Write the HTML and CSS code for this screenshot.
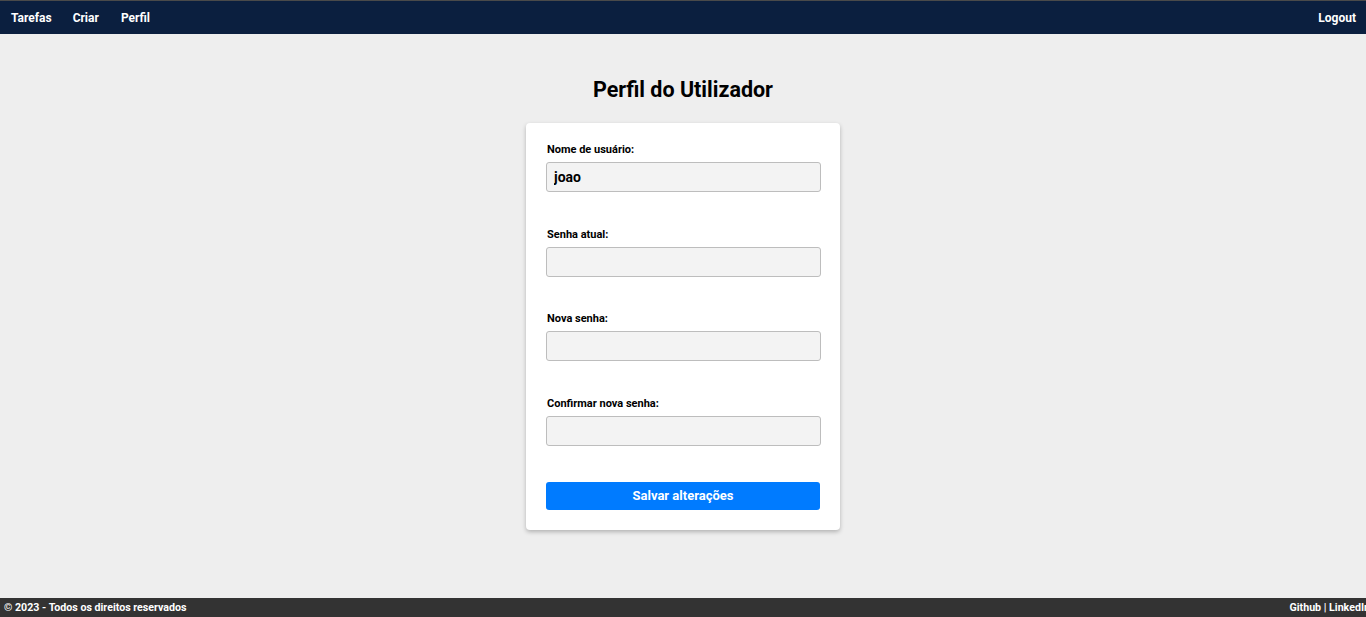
FILE: index.html
```html
<!DOCTYPE html>
<html lang="pt">
<head>
<meta charset="utf-8">
<title>Perfil</title>
<link rel="stylesheet" href="styles.css">
</head>
<body>
<nav class="navbar">
  <div class="nav-left">
    <a href="#" class="nav-link">Tarefas</a>
    <a href="#" class="nav-link">Criar</a>
    <a href="#" class="nav-link nav-link-last">Perfil</a>
  </div>
  <a href="#" class="nav-link">Logout</a>
</nav>
<main class="main">
  <h1 class="title">Perfil do Utilizador</h1>
  <form class="card">
    <div class="group">
      <label class="label">Nome de usuário:</label>
      <input class="input input-user" type="text" value="joao">
    </div>
    <div class="group">
      <label class="label">Senha atual:</label>
      <input class="input" type="password">
    </div>
    <div class="group">
      <label class="label">Nova senha:</label>
      <input class="input" type="password">
    </div>
    <div class="group">
      <label class="label">Confirmar nova senha:</label>
      <input class="input" type="password">
    </div>
    <button class="btn" type="button">Salvar alterações</button>
  </form>
</main>
<footer class="footer">
  <span>© 2023 - Todos os direitos reservados</span>
  <span class="footer-links">Github | LinkedIn</span>
</footer>
</body>
</html>
```

FILE: styles.css
```css
* { box-sizing: border-box; }
html, body { margin: 0; padding: 0; }
body {
  background: #eeeeee;
  font-family: Roboto, "Liberation Sans", Arial, sans-serif;
  color: #000;
  height: 617px;
  display: flex;
  flex-direction: column;
  overflow: hidden;
}
.navbar {
  height: 34px;
  background: #0b1f3f;
  border-top: 1px solid #4a4a4a;
  display: flex;
  justify-content: space-between;
  align-items: center;
  padding: 0 10px 0 11px;
}
.nav-left { display: flex; gap: 21px; }
.nav-link-last { margin-left: 1px; }
.nav-link {
  color: #fff;
  text-decoration: none;
  font-weight: 700;
  font-size: 12px;
}
.main {
  flex: 1;
  display: flex;
  flex-direction: column;
  align-items: center;
}
.title {
  font-size: 21.5px;
  line-height: 26px;
  font-weight: 700;
  margin: 43px 0 20px;
}
.card {
  width: 314px;
  background: #fff;
  border-radius: 4px;
  box-shadow: 0 2px 4px rgba(0,0,0,0.25);
  padding: 20px 20px 20px 20px;
  display: flex;
  flex-direction: column;
}
.group {
  display: flex;
  flex-direction: column;
  margin-bottom: 35.67px;
}
.label {
  font-size: 11px;
  font-weight: 700;
  line-height: 14px;
  margin-bottom: 5px;
  padding-left: 1px;
}
.input {
  height: 30px;
  width: 275px;
  background: #f3f3f3;
  border: 1px solid #bdbdbd;
  border-radius: 3px;
  padding: 0 7px;
  font-family: inherit;
  font-size: 14px;
  font-weight: 700;
  color: #000;
  outline: none;
}
.btn {
  height: 28px;
  width: 274px;
  background: #007bff;
  border: none;
  border-radius: 3px;
  color: #fff;
  font-family: inherit;
  font-weight: 700;
  font-size: 13px;
  cursor: pointer;
}
.footer {
  height: 19px;
  background: #333333;
  color: #fff;
  font-weight: 700;
  font-size: 10.65px;
  display: flex;
  justify-content: space-between;
  align-items: center;
  padding: 0 0 0 4px;
  overflow: hidden;
  white-space: nowrap;
}
.footer-links { margin-right: -4px; }
```
